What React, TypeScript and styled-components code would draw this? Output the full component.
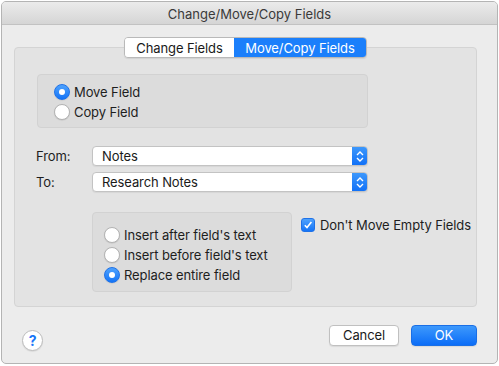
import React from 'react';
import styled, { createGlobalStyle } from 'styled-components';

const GlobalStyle = createGlobalStyle`
  html, body {
    margin: 0;
    padding: 0;
    background: #ffffff;
  }
  body {
    font-family: Inter, "Liberation Sans", sans-serif;
    font-size: 13px;
    letter-spacing: -0.1px;
    color: #222222;
  }
`;

const Window = styled.div`
  margin: 1px 0 0 1px;
  width: 495px;
  height: 361px;
  border: 1px solid #b4b4b4;
  border-radius: 5px;
  background: #ececec;
  overflow: hidden;
  display: flex;
  flex-direction: column;
  box-sizing: content-box;
`;

const TitleBar = styled.div`
  height: 21px;
  border-bottom: 1px solid #c2c2c2;
  background: linear-gradient(#ebebeb, #d5d5d5);
  display: flex;
  align-items: center;
  justify-content: center;
  color: #3a3a3a;
  font-size: 13px;
  letter-spacing: 0;
  padding-top: 1px;
`;

const Body = styled.div`
  flex: 1;
  display: flex;
  flex-direction: column;
  padding: 12px 20px 0 12px;
`;

const TabRow = styled.div`
  display: flex;
  justify-content: center;
  margin-bottom: -11px;
  position: relative;
  z-index: 1;
`;

const Segmented = styled.div`
  display: flex;
  height: 21px;
  border: 1px solid #b9b9b9;
  border-radius: 4px;
  overflow: hidden;
  box-sizing: border-box;
  box-shadow: 0 1px 1px rgba(0, 0, 0, 0.08);
`;

const Segment = styled.div<{ $active?: boolean; $w: number }>`
  width: ${(p) => p.$w}px;
  display: flex;
  align-items: center;
  justify-content: center;
  background: ${(p) => (p.$active ? '#1b7ffb' : '#ffffff')};
  color: ${(p) => (p.$active ? '#ffffff' : '#1a1a1a')};
`;

const Panel = styled.div`
  height: 260px;
  box-sizing: border-box;
  border: 1px solid #d4d4d4;
  border-radius: 4px;
  background: #e3e3e3;
  padding: 26px 0 0 22px;
  display: flex;
  flex-direction: column;
`;

const GroupBox = styled.div<{ $w: number; $h: number; $pt: number; $pl: number }>`
  width: ${(p) => p.$w}px;
  height: ${(p) => p.$h}px;
  box-sizing: border-box;
  border: 1px solid #d2d2d2;
  border-radius: 4px;
  background: #dcdcdc;
  padding: ${(p) => p.$pt}px 0 0 ${(p) => p.$pl}px;
  display: flex;
  flex-direction: column;
`;

const OptionRow = styled.label`
  height: 20px;
  display: flex;
  align-items: center;
  gap: 4px;
  color: #1e1e1e;
`;

const RadioDot = styled.span<{ $on?: boolean }>`
  width: 16px;
  height: 16px;
  box-sizing: border-box;
  border-radius: 50%;
  flex-shrink: 0;
  display: flex;
  align-items: center;
  justify-content: center;
  border: 1px solid ${(p) => (p.$on ? '#1f72e8' : '#b3b3b3')};
  background: ${(p) => (p.$on ? 'linear-gradient(#4ea2fd, #1474f7)' : '#ffffff')};
  box-shadow: 0 0.5px 1px rgba(0, 0, 0, 0.12);

  &::after {
    content: '';
    display: ${(p) => (p.$on ? 'block' : 'none')};
    width: 6px;
    height: 6px;
    border-radius: 50%;
    background: #ffffff;
  }
`;

const FieldRows = styled.div`
  display: flex;
  flex-direction: column;
  gap: 6px;
  margin-top: 18px;
`;

const FieldRow = styled.div`
  display: flex;
  align-items: center;
`;

const FieldLabel = styled.span`
  width: 56px;
  margin-left: -1px;
  color: #1e1e1e;
`;

const Popup = styled.div`
  width: 276px;
  height: 20px;
  box-sizing: border-box;
  border: 1px solid #c3c3c3;
  border-radius: 4px;
  background: #ffffff;
  display: flex;
  align-items: center;
  overflow: hidden;
  box-shadow: 0 1px 1px rgba(0, 0, 0, 0.06);
`;

const PopupText = styled.span`
  flex: 1;
  padding-left: 9px;
  color: #1a1a1a;
`;

const PopupArrows = styled.span`
  width: 16px;
  height: 20px;
  margin-right: -1px;
  background: linear-gradient(#3f9afc, #0f6ff7);
  display: flex;
  align-items: center;
  justify-content: center;
`;

const LowerRow = styled.div`
  display: flex;
  align-items: flex-start;
  margin-top: 20px;
  margin-left: 55px;
`;

const LowerGroup = styled(GroupBox)`
  & > label {
    height: 20px;
  }
`;

const CheckRow = styled.label`
  display: flex;
  align-items: center;
  gap: 5px;
  margin-left: 9px;
  margin-top: 5px;
  color: #1e1e1e;
`;

const CheckBox = styled.span`
  width: 14px;
  height: 14px;
  box-sizing: border-box;
  border-radius: 3px;
  border: 1px solid #1f72e8;
  background: linear-gradient(#4ea2fd, #1474f7);
  display: flex;
  align-items: center;
  justify-content: center;
`;

const Footer = styled.div`
  display: flex;
  align-items: center;
  margin-top: 12px;
  padding-left: 8px;
`;

const HelpButton = styled.div`
  width: 21px;
  height: 21px;
  box-sizing: border-box;
  border-radius: 50%;
  border: 1px solid #bcbcbc;
  background: #ffffff;
  color: #1776f8;
  font-weight: 700;
  font-size: 14px;
  display: flex;
  align-items: center;
  justify-content: center;
  margin-top: 11px;
  box-shadow: 0 1px 1px rgba(0, 0, 0, 0.08);
`;

const Spacer = styled.div`
  flex: 1;
`;

const PushButton = styled.div<{ $primary?: boolean; $w: number }>`
  width: ${(p) => p.$w}px;
  height: 21px;
  box-sizing: border-box;
  border-radius: 4px;
  margin-left: 12px;
  display: flex;
  align-items: center;
  justify-content: center;
  border: 1px solid ${(p) => (p.$primary ? '#1a6fe6' : '#c0c0c0')};
  background: ${(p) => (p.$primary ? 'linear-gradient(#3d99fc, #0c6df7)' : '#ffffff')};
  color: ${(p) => (p.$primary ? '#ffffff' : '#1a1a1a')};
  box-shadow: 0 1px 1px rgba(0, 0, 0, 0.08);
`;

const Radio: React.FC<{ on?: boolean; label: string }> = ({ on, label }) => (
  <OptionRow>
    <RadioDot $on={on} />
    {label}
  </OptionRow>
);

const Arrows = () => (
  <PopupArrows>
    <svg width="8" height="13" viewBox="0 0 8 13">
      <path d="M1 5 L4 2 L7 5" fill="none" stroke="#fff" strokeWidth="1.4" />
      <path d="M1 8 L4 11 L7 8" fill="none" stroke="#fff" strokeWidth="1.4" />
    </svg>
  </PopupArrows>
);

const App: React.FC = () => {
  return (
    <>
      <GlobalStyle />
      <Window>
        <TitleBar>Change/Move/Copy Fields</TitleBar>
        <Body>
          <TabRow>
            <Segmented>
              <Segment $w={109}>Change Fields</Segment>
              <Segment $w={132} $active>
                Move/Copy Fields
              </Segment>
            </Segmented>
          </TabRow>
          <Panel>
            <GroupBox $w={331} $h={54} $pt={7} $pl={16}>
              <Radio on label="Move Field" />
              <Radio label="Copy Field" />
            </GroupBox>
            <FieldRows>
              <FieldRow>
                <FieldLabel>From:</FieldLabel>
                <Popup>
                  <PopupText>Notes</PopupText>
                  <Arrows />
                </Popup>
              </FieldRow>
              <FieldRow>
                <FieldLabel>To:</FieldLabel>
                <Popup>
                  <PopupText>Research Notes</PopupText>
                  <Arrows />
                </Popup>
              </FieldRow>
            </FieldRows>
            <LowerRow>
              <LowerGroup $w={200} $h={80} $pt={12} $pl={11}>
                <Radio label="Insert after field's text" />
                <Radio label="Insert before field's text" />
                <Radio on label="Replace entire field" />
              </LowerGroup>
              <CheckRow>
                <CheckBox>
                  <svg width="10" height="10" viewBox="0 0 10 10">
                    <path d="M1.8 5.2 L4 7.6 L8.4 2" fill="none" stroke="#fff" strokeWidth="1.6" />
                  </svg>
                </CheckBox>
                Don't Move Empty Fields
              </CheckRow>
            </LowerRow>
          </Panel>
          <Footer>
            <HelpButton>?</HelpButton>
            <Spacer />
            <PushButton $w={70}>Cancel</PushButton>
            <PushButton $w={66} $primary>
              OK
            </PushButton>
          </Footer>
        </Body>
      </Window>
    </>
  );
};

export default App;
